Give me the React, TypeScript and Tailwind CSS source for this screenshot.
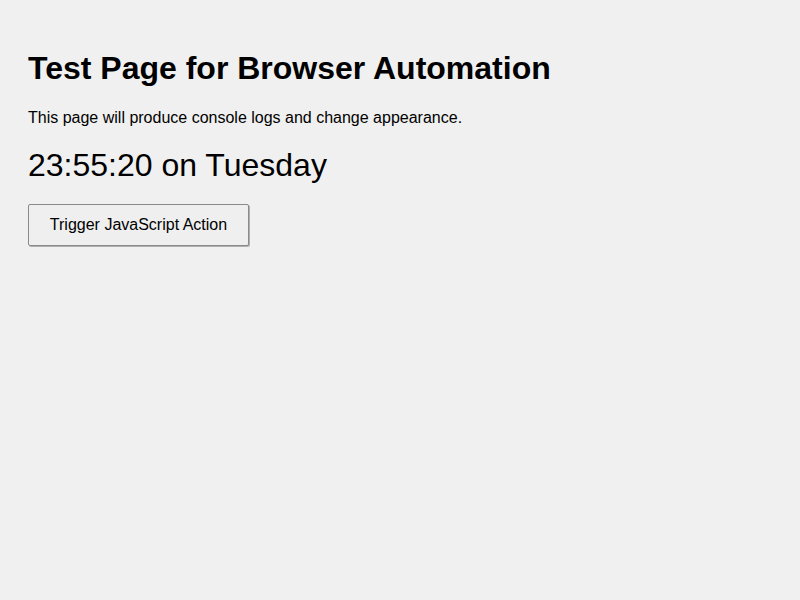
export default function App() {
  return (
    <div
      className="min-h-screen w-full bg-[#f0f0f0] text-black px-[28px] pt-[28px]"
      style={{ fontFamily: '"Liberation Sans", Arial, sans-serif' }}
    >
      <h1 className="text-[32px] font-bold leading-[37px] pt-[22px] m-0">
        Test Page for Browser Automation
      </h1>
      <p className="text-[16px] leading-[18px] mt-[22px]">
        This page will produce console logs and change appearance.
      </p>
      <div className="text-[32px] leading-[37px] mt-[20px]">23:55:20 on Tuesday</div>
      <button
        type="button"
        className="mt-[20px] h-[42px] w-[221px] text-[16px] leading-[18px] bg-[#efefef] border border-[#8a8a8a] rounded-[2px] shadow-[1px_1px_0_#b0b0b0] flex items-center justify-center"
      >
        Trigger JavaScript Action
      </button>
    </div>
  );
}
